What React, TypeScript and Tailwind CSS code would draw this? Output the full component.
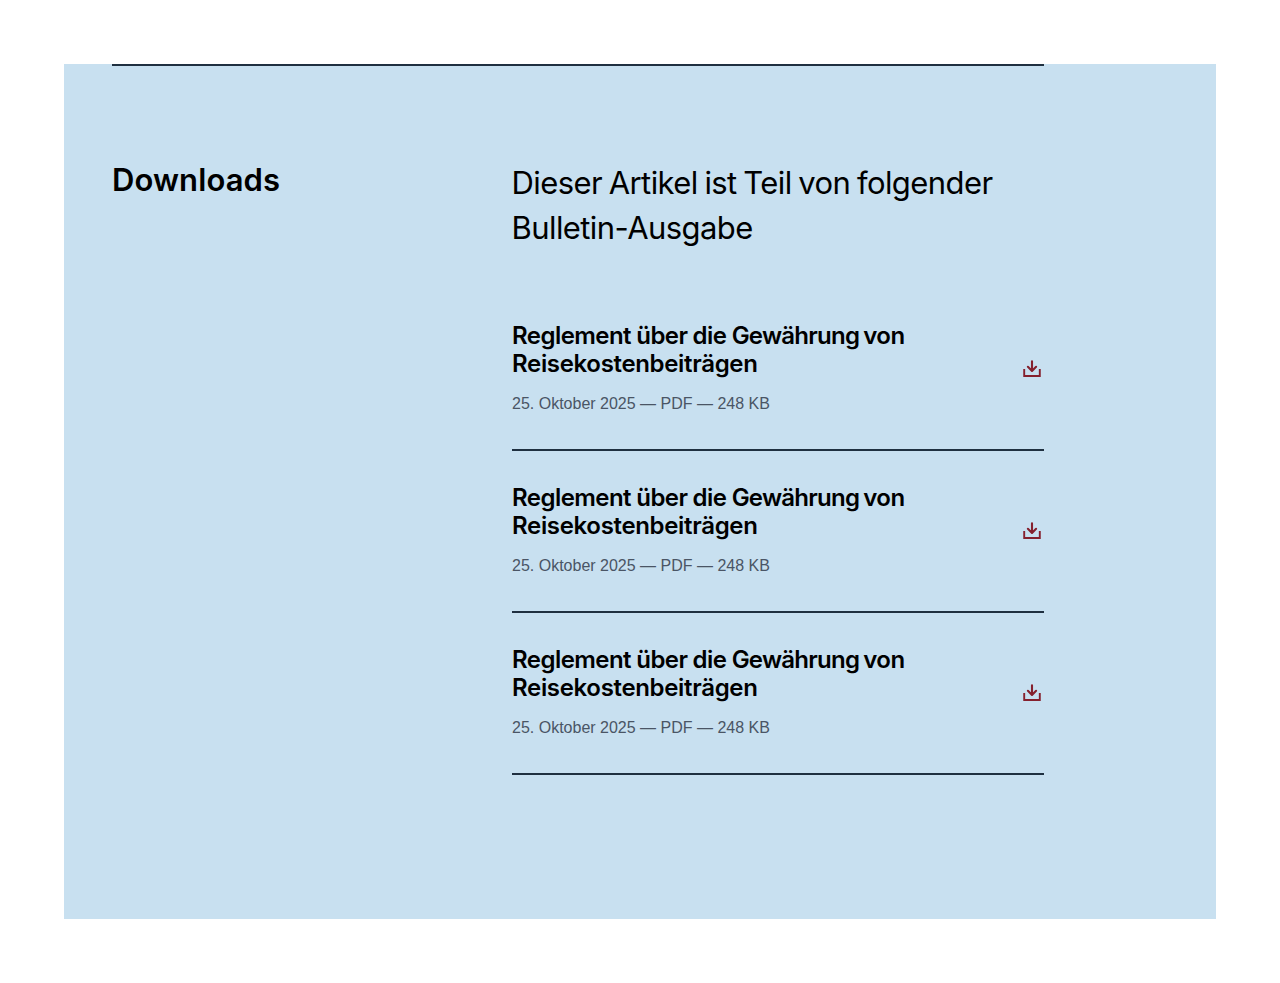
const docs = [1, 2, 3];

function DownloadIcon() {
  return (
    <svg
      width="24"
      height="24"
      viewBox="0 0 24 24"
      fill="none"
      stroke="#85212e"
      strokeWidth="1.9"
      className="shrink-0"
    >
      <path d="M4.2 12V19H19.8V12" />
      <path d="M12 4.2V13.6M7.9 9.8L12 13.9L16.1 9.8" strokeWidth="2.1" strokeLinecap="round" strokeLinejoin="round" />
    </svg>
  );
}

export default function App() {
  return (
    <div className="min-h-[983px] bg-white p-16 font-['Inter',sans-serif] text-black">
      <section className="h-[855px] bg-[#c8e0f0] pl-12 pr-[172px]">
        <div className="flex border-t-2 border-[#1f3040] pt-[94px]">
          <h2 className="w-[400px] shrink-0 pt-0.5 text-[31px] font-semibold leading-9 tracking-[0.1px]">Downloads</h2>
          <div className="w-[532px]">
            <p className="mb-[39px] -ml-[0.5px] text-[31px] leading-[45px] tracking-[-0.58px] [word-spacing:-1.5px]">
              Dieser Artikel ist Teil von folgender
              <br />
              Bulletin-Ausgabe
            </p>
            {docs.map((id) => (
              <a key={id} className="flex h-[162px] items-center justify-between border-b-2 border-[#1f3040]">
                <div>
                  <h3 className="text-2xl font-semibold leading-7">
                    <span className="block tracking-[-0.55px] [word-spacing:-0.3px]">
                      Reglement über die <span className="tracking-[-0.75px]">Gewährung</span>
                      <span className="[word-spacing:-1.4px]"> von</span>
                    </span>
                    <span className="block tracking-[-0.33px]">Reisekostenbeiträgen</span>
                  </h3>
                  <p className="mt-3.5 font-['Liberation_Sans',sans-serif] text-base text-gray-600">
                    25. Oktober 2025 — PDF — 248 KB
                  </p>
                </div>
                <DownloadIcon />
              </a>
            ))}
          </div>
        </div>
      </section>
    </div>
  );
}
